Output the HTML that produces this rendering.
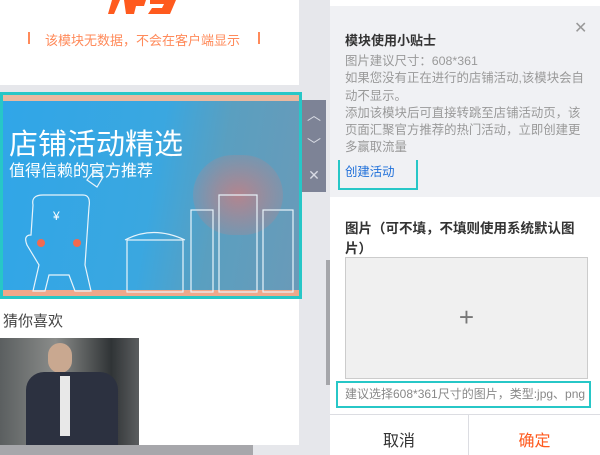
<!DOCTYPE html>
<html><head><meta charset="utf-8"><style>
*{margin:0;padding:0;box-sizing:border-box}
body{width:600px;height:455px;overflow:hidden;background:#e6e7eb;font-family:"Liberation Sans","Noto Sans CJK SC",sans-serif;position:relative}
.a{position:absolute}
</style></head><body>
<div class="a" style="left:0;top:0;width:299px;height:85px;background:#fff"></div>
<div class="a" style="left:106px;top:0;width:76px;height:16px;overflow:hidden">
<svg width="76" height="16"><path d="M6 0 L14 0 L8 14 L2 14Z M18 0 L40 0 L38 6 L30 6 L28 14 L20 14Z M44 0 L70 0 L64 14 L42 14 L46 8 L56 8 L58 4 L44 4Z" fill="#ff5a1e"/></svg></div>
<div class="a" style="left:28px;top:32px;width:2px;height:12px;background:#ff8a5a"></div>
<div class="a" style="left:258px;top:32px;width:2px;height:12px;background:#ff8a5a"></div>
<div class="a" style="left:45px;top:30px;font-size:13px;color:#ff8a5a;white-space:nowrap">该模块无数据，不会在客户端显示</div>
<div class="a" style="left:0;top:92px;width:302px;height:207px;border:3px solid #27c7c7;background:linear-gradient(100deg,#30a6e8 0%,#3aa7e0 50%,#5a9fc0 70%,#6a9ab8 100%)">
<div class="a" style="left:0;top:0;width:296px;height:6px;background:#e9b9a0"></div>
<div class="a" style="left:0;top:195px;width:296px;height:6px;background:#f0a88a"></div>
<div class="a" style="left:190px;top:60px;width:90px;height:80px;border-radius:40px;background:radial-gradient(#d77a7a,rgba(120,160,190,0));opacity:.7"></div>
<div class="a" style="left:6px;top:26px;font-size:29px;color:#fff;white-space:nowrap">店铺活动精选</div>
<div class="a" style="left:6px;top:62px;font-size:16px;color:#fff;white-space:nowrap">值得信赖的官方推荐</div>
<svg class="a" style="left:0;top:0" width="296" height="201"><g fill="none" stroke="#e8f4fb" stroke-width="1.2"><path d="M30 110 Q28 100 40 100 L80 100 Q88 100 86 112 L82 170 L88 196 L72 196 L66 180 L46 180 L42 196 L30 196 L36 170 L24 150 Q20 140 28 140 Z"/><path d="M84 85 L92 75 L100 82 L94 92Z"/><rect x="124" y="145" width="56" height="52"/><path d="M122 145 Q150 130 182 145"/><rect x="188" y="115" width="22" height="82"/><rect x="216" y="100" width="38" height="97"/><rect x="260" y="115" width="30" height="82"/></g>
<circle cx="38" cy="148" r="4" fill="#f26a50"/><circle cx="74" cy="148" r="4" fill="#f26a50"/><text x="50" y="125" fill="#fff" font-size="12">¥</text></svg>
</div>
<div class="a" style="left:302px;top:100px;width:24px;height:92px;background:#7d8396;color:#d8dbe4;font-size:14px;text-align:center;line-height:30px">︿<br>﹀<br>✕</div>
<div class="a" style="left:0;top:299px;width:299px;height:146px;background:#fff"></div>
<div class="a" style="left:3px;top:310px;font-size:15px;color:#444">猜你喜欢</div>
<div class="a" style="left:0;top:338px;width:139px;height:107px;background:linear-gradient(90deg,#5b5f60,#8a8c8a 40%,#303436 80%,#5b5d5f)">
<div class="a" style="left:48px;top:5px;width:24px;height:30px;border-radius:12px;background:#c9a890"></div>
<div class="a" style="left:26px;top:34px;width:92px;height:73px;border-radius:18px 18px 0 0;background:#2c3140"></div>
<div class="a" style="left:60px;top:38px;width:10px;height:60px;background:#e8e8e8"></div></div>
<div class="a" style="left:0;top:445px;width:253px;height:10px;background:#a7a7ab"></div>
<div class="a" style="left:326px;top:260px;width:4px;height:125px;background:#a5a6aa"></div>
<div class="a" style="left:330px;top:0;width:270px;height:455px;background:#fff"></div>
<div class="a" style="left:330px;top:6px;width:270px;height:191px;background:#f0f1f4"></div>
<div class="a" style="left:574px;top:18px;font-size:16px;color:#999">✕</div>
<div class="a" style="left:345px;top:30px;font-size:13px;font-weight:bold;color:#333">模块使用小贴士</div>
<div class="a" style="left:345px;top:53px;width:240px;font-size:12.4px;line-height:17.3px;color:#999">图片建议尺寸：608*361<br>如果您没有正在进行的店铺活动,该模块会自动不显示。<br>添加该模块后可直接转跳至店铺活动页，该页面汇聚官方推荐的热门活动，立即创建更多赢取流量</div>
<div class="a" style="left:338px;top:160px;width:80px;height:30px;border:2px solid #27c7c7;border-top:none"></div>
<div class="a" style="left:345px;top:162px;font-size:12.4px;color:#1e6fd9">创建活动</div>
<div class="a" style="left:345px;top:219px;width:230px;font-size:13.5px;font-weight:bold;color:#333;line-height:20px">图片（可不填，不填则使用系统默认图片）</div>
<div class="a" style="left:345px;top:257px;width:243px;height:122px;background:#f0f0f0;border:1px solid #ccc;text-align:center;line-height:118px;font-size:26px;color:#777;font-weight:300">+</div>
<div class="a" style="left:336px;top:381px;width:255px;height:27px;border:2px solid #27c7c7;font-size:12px;color:#888;padding-left:7px;line-height:22px;white-space:nowrap">建议选择608*361尺寸的图片，类型:jpg、png</div>
<div class="a" style="left:330px;top:414px;width:270px;height:1px;background:#dcdde2"></div>
<div class="a" style="left:468px;top:414px;width:1px;height:41px;background:#dcdde2"></div>
<div class="a" style="left:330px;top:427px;width:138px;text-align:center;font-size:16px;color:#333">取消</div>
<div class="a" style="left:469px;top:427px;width:131px;text-align:center;font-size:16px;color:#ff5a1e">确定</div>
</body></html>
